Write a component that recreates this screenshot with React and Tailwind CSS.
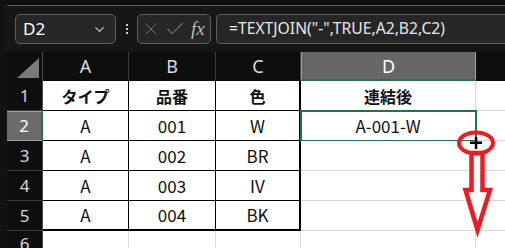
import React from 'react';
import { ChevronDown, X, Check } from 'lucide-react';

const cellFont = { fontFamily: '"Noto Sans CJK JP", "Noto Sans", sans-serif' };

const rows = [
    ['タイプ', '品番', '色', '連結後'],
    ['A', '001', 'W', 'A-001-W'],
    ['A', '002', 'BR', ''],
    ['A', '003', 'IV', ''],
    ['A', '004', 'BK', ''],
];

const RowHeader = ({ n, selected }) => (
    <div
        className={`flex items-center justify-center text-[17px] border-b ${selected
            ? 'bg-[#6b6b6b] text-white border-t border-t-[#a0a0a0] border-b-[#a0a0a0] border-r-2 border-r-[#217346]'
            : 'bg-[#0e0e0e] text-[#d8d8d8] border-b-[#3a3a3a] border-r border-r-[#4a4a4a]'}`}
    >
        {n}
    </div>
);

const App = () => {
    return (
        <div
            className="relative w-[505px] h-[248px] overflow-hidden bg-[#0b0b0b] flex"
            style={{ fontFamily: '"Noto Sans", "Open Sans", sans-serif' }}
        >
            {/* left edge */}
            <div className="w-[7px] shrink-0 bg-[#121212]" />

            <div className="flex-1 flex flex-col">
                {/* top strip */}
                <div className="h-[6px] shrink-0 bg-[#0e0e0e] border-b border-[#5a5a5a]" />

                {/* formula bar */}
                <div className="h-[46px] shrink-0 bg-[#161616] flex items-start pt-[8px] pl-[8px]">
                    <div className="w-[101px] h-[30px] rounded-[5px] border border-[#5f5f5f] bg-[#262626] flex items-center justify-between pl-[7px] pr-[8px]">
                        <span className="text-[17px] text-white">D2</span>
                        <ChevronDown size={15} strokeWidth={1.8} className="text-[#cfcfcf]" />
                    </div>
                    <div className="w-[21px] h-[30px] flex flex-col items-center justify-center gap-[2px]">
                        <span className="w-[2px] h-[2px] bg-[#d0d0d0]" />
                        <span className="w-[2px] h-[2px] bg-[#d0d0d0]" />
                        <span className="w-[2px] h-[2px] bg-[#d0d0d0]" />
                    </div>
                    <div className="w-[74px] h-[30px] rounded-[5px] border border-[#5f5f5f] bg-[#262626] flex items-center pl-[3px]">
                        <X size={20} strokeWidth={1.2} className="text-[#707070]" />
                        <Check size={22} strokeWidth={1.2} className="ml-[3px] text-[#707070]" />
                        <span
                            className="ml-[5px] text-[19px] italic text-[#bdbdbd]"
                            style={{ fontFamily: '"Liberation Serif", "DejaVu Serif", serif' }}
                        >
                            fx
                        </span>
                    </div>
                    <div className="ml-[5px] flex-1 h-[30px] rounded-l-[5px] border border-r-0 border-[#5f5f5f] bg-[#262626] flex items-center pl-[12px]">
                        <span className="text-[15.7px] text-[#e6e6e6] whitespace-nowrap">=TEXTJOIN("-",TRUE,A2,B2,C2)</span>
                    </div>
                </div>

                {/* sheet */}
                <div className="relative flex-1 grid grid-cols-[36px_86px_87px_85px_175px_1fr] grid-rows-[29px_30px_30px_30px_30px_30px_1fr]">
                    {/* column headers */}
                    <div className="bg-[#0e0e0e] border-r border-[#4a4a4a] flex items-end justify-end pr-[3px] pb-[3px]">
                        <div className="w-0 h-0 border-l-[22px] border-l-transparent border-b-[20px] border-b-[#7a7a7a]" />
                    </div>
                    {['A', 'B', 'C'].map((c) => (
                        <div key={c} className="bg-[#0e0e0e] border-r border-[#3f3f3f] flex items-center justify-center text-[18px] text-[#dcdcdc] pb-[1px]">
                            {c}
                        </div>
                    ))}
                    <div className="bg-[#676767] border-x border-[#a0a0a0] border-b-2 border-b-[#217346] flex items-center justify-center text-[18px] text-white pt-[1px]">
                        D
                    </div>
                    <div className="bg-[#0e0e0e]" />

                    {/* rows */}
                    {rows.map((r, i) => (
                        <React.Fragment key={i}>
                            <RowHeader n={i + 1} selected={i === 1} />
                            {r.slice(0, 3).map((v, j) => (
                                <div
                                    key={j}
                                    className={`bg-white flex items-center justify-center text-[#111] border-black ${j === 2 ? 'border-r-2' : 'border-r'} ${i === 4 ? 'border-b-2' : 'border-b'} ${i === 0 ? 'font-bold text-[16px]' : 'text-[17px]'}`}
                                    style={cellFont}
                                >
                                    {v}
                                </div>
                            ))}
                            <div
                                className={`relative bg-white flex items-center justify-center text-[#111] border-r border-b border-[#d9d9d9] ${i === 0 ? 'font-bold text-[16px]' : 'text-[17px]'}`}
                                style={cellFont}
                            >
                                {r[3]}
                                {i === 1 && (
                                    <div className="absolute -left-[1px] -top-[1px] w-[177px] h-[32px] border-2 border-[#217346]" />
                                )}
                            </div>
                            <div className="bg-white border-b border-[#d9d9d9]" />
                        </React.Fragment>
                    ))}

                    {/* row 6 */}
                    <RowHeader n={6} />
                    <div className="bg-white border-r border-[#d9d9d9]" />
                    <div className="bg-white border-r border-[#d9d9d9]" />
                    <div className="bg-white border-r border-[#d9d9d9]" />
                    <div className="bg-white border-r border-[#d9d9d9]" />
                    <div className="bg-white" />
                </div>
            </div>

            {/* annotation over the fill handle */}
            <svg className="absolute left-0 top-0 pointer-events-none" width="505" height="248">
                <polygon
                    points="471.5,153 471.5,190 465.5,190 477.5,230 490,190 482.5,190 482.5,153"
                    fill="white"
                    stroke="#ec1c24"
                    strokeWidth="4.5"
                    strokeLinejoin="miter"
                />
                <ellipse cx="476" cy="143" rx="17" ry="10.5" fill="none" stroke="#ec1c24" strokeWidth="4" />
                <rect x="470" y="141.5" width="12" height="2.5" fill="#000" />
                <rect x="474.8" y="137" width="2.5" height="12" fill="#000" />
            </svg>
        </div>
    );
};

export default App;
